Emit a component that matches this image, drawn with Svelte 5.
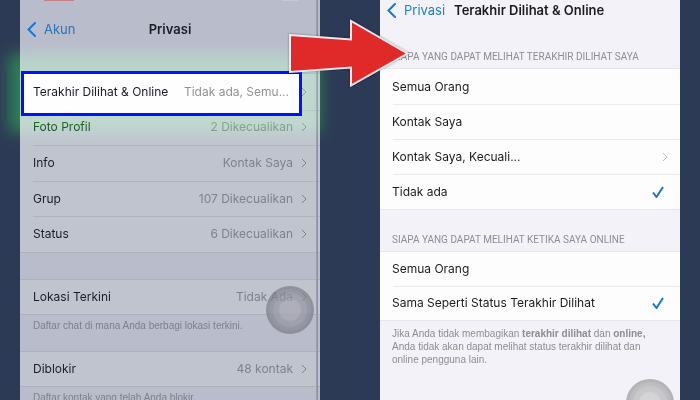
<script lang="ts">
  let whoLastSeen = $state('none');
  let whoOnline = $state('same');

  const privacy = [
    { label: 'Terakhir Dilihat & Online', value: 'Tidak ada, Semu...', active: true },
    { label: 'Foto Profil', value: '2 Dikecualikan' },
    { label: 'Info', value: 'Kontak Saya' },
    { label: 'Grup', value: '107 Dikecualikan' },
    { label: 'Status', value: '6 Dikecualikan' },
  ];

  const lastSeenOptions = [
    { id: 'all', label: 'Semua Orang' },
    { id: 'contacts', label: 'Kontak Saya' },
    { id: 'except', label: 'Kontak Saya, Kecuali...', more: true },
    { id: 'none', label: 'Tidak ada' },
  ];

  const onlineOptions = [
    { id: 'all', label: 'Semua Orang' },
    { id: 'same', label: 'Sama Seperti Status Terakhir Dilihat' },
  ];
</script>

{#snippet chevron()}
  <svg class="chevron" viewBox="0 0 6 10" width="6" height="10" aria-hidden="true">
    <path d="M1 1l4 4-4 4" />
  </svg>
{/snippet}

{#snippet back(label: string)}
  <button class="back" type="button">
    <svg viewBox="0 0 9 15" width="9" height="15" aria-hidden="true">
      <path d="M8 1L1.5 7.5 8 14" />
    </svg>
    {label}
  </button>
{/snippet}

{#snippet row(label: string, value: string, active = false)}
  <button class="row" class:active type="button">
    <span class="label">{label}</span>
    <span class="value">{value}</span>
    {@render chevron()}
  </button>
{/snippet}

{#snippet check()}
  <svg class="check" viewBox="0 0 12 12" width="12" height="12" aria-hidden="true">
    <path d="M1 6.5L4.5 11 11 1" />
  </svg>
{/snippet}

<main>
  <section class="phone dim">
    <div class="status"><i></i><b></b></div>
    <header>
      {@render back('Akun')}
      <h1>Privasi</h1>
    </header>

    <div class="list five">
      {#each privacy as item}
        {@render row(item.label, item.value, item.active)}
      {/each}
    </div>

    <div class="list spaced">
      {@render row('Lokasi Terkini', 'Tidak Ada')}
    </div>
    <p>Daftar chat di mana Anda berbagi lokasi terkini.</p>

    <div class="list after-note">
      {@render row('Diblokir', '48 kontak')}
    </div>
    <p>Daftar kontak yang telah Anda blokir.</p>

    <button class="assist" type="button" aria-label="AssistiveTouch"></button>
  </section>

  <section class="phone bright">
    <header>
      {@render back('Privasi')}
      <h1>Terakhir Dilihat &amp; Online</h1>
    </header>

    <h2>SIAPA YANG DAPAT MELIHAT TERAKHIR DILIHAT SAYA</h2>
    <div class="list four">
      {#each lastSeenOptions as option}
        <label class="row">
          <input type="radio" name="last-seen" value={option.id} bind:group={whoLastSeen} />
          <span class="label">{option.label}</span>
          {#if whoLastSeen === option.id}
            {@render check()}
          {:else if option.more}
            {@render chevron()}
          {/if}
        </label>
      {/each}
    </div>

    <h2>SIAPA YANG DAPAT MELIHAT KETIKA SAYA ONLINE</h2>
    <div class="list">
      {#each onlineOptions as option}
        <label class="row">
          <input type="radio" name="online" value={option.id} bind:group={whoOnline} />
          <span class="label">{option.label}</span>
          {#if whoOnline === option.id}
            {@render check()}
          {/if}
        </label>
      {/each}
    </div>
    <p>
      Jika Anda tidak membagikan <strong>terakhir dilihat</strong> dan <strong>online,</strong>
      Anda tidak akan dapat melihat status terakhir dilihat dan online pengguna lain.
    </p>

    <button class="assist" type="button" aria-label="AssistiveTouch"></button>
  </section>

  <svg class="arrow" viewBox="0 0 120 68" width="120" height="68" aria-hidden="true">
    <path d="M1 16L62 20.5V2L118.5 34.5 62 66.5V48.5L1 53z" />
  </svg>
</main>

<style>
  :global(body) {
    background: #2d3a55;
  }

  main {
    position: relative;
    display: flex;
    justify-content: center;
    gap: 60px;
    height: 100vh;
    overflow: hidden;
    background: #2d3a55;
    font-family: Inter, 'Liberation Sans', sans-serif;
    font-size: 12px;
    line-height: 16px;
  }

  button {
    border: 0;
    padding: 0;
    background: none;
    color: inherit;
    font: inherit;
    text-align: left;
  }

  svg {
    flex: none;
    fill: none;
  }

  .phone {
    position: relative;
    flex: 0 1 300px;
    min-width: 0;
    height: 100%;
  }

  .dim {
    --line: #adb0bb;
    --link: #2c73b8;
    --note: #7d808b;
    --value: #7f828c;
    --cell: #c0c4cf;
    background: #b9bccb;
    color: #1b1d26;
  }

  .bright {
    --line: #e6e6ea;
    --link: #1a7fd0;
    --note: #8d8d94;
    --value: #b9b9be;
    --cell: #fdfdfe;
    background: #f3f2f8;
    color: #1c1c1e;
  }

  /* right bezel of the first phone */
  .dim::after {
    content: '';
    position: absolute;
    top: 0;
    bottom: 0;
    right: 2px;
    width: 2px;
    background: linear-gradient(90deg, #a5a8b4, #858995);
  }

  .status {
    display: flex;
    justify-content: space-between;
    height: 1px;
    padding: 0 22px 0 24px;
  }

  .status i {
    width: 30px;
    background: #c58088;
  }

  .status b {
    width: 16px;
    background: #c6c9d3;
  }

  header {
    display: grid;
    grid-template-columns: 1fr auto 1fr;
    align-items: center;
    padding: 0 7px;
  }

  .dim header {
    height: 56px;
    margin-bottom: 16px;
  }

  .bright header {
    grid-template-columns: auto 1fr;
    gap: 9px;
    height: 20px;
    margin-bottom: 7px;
  }

  .back {
    display: flex;
    align-items: center;
    gap: 8px;
    color: var(--link);
    font-size: 13px;
  }

  .back svg {
    stroke: #1277dd;
    stroke-width: 2;
    stroke-linecap: round;
  }

  h1 {
    margin: 0;
    font-size: 13px;
    font-weight: 600;
  }

  h2 {
    margin: 0;
    padding: 23px 12px 4px;
    color: var(--note);
    font-family: Roboto, 'Liberation Sans', sans-serif;
    font-size: 10px;
    font-weight: 400;
    line-height: 14px;
    white-space: nowrap;
  }

  .list {
    box-sizing: border-box;
    display: grid;
    grid-auto-rows: 1fr;
    border: solid var(--line);
    border-width: 1px 0;
    background: var(--cell);
  }

  .five {
    min-height: 180px;
  }

  .four {
    min-height: 142px;
  }

  .spaced {
    margin-top: 26px;
  }

  .after-note {
    margin-top: 19px;
  }

  .row {
    position: relative;
    display: flex;
    align-items: center;
    min-height: 34px;
    padding: 0 13px;
    text-align: left;
  }

  .bright .row {
    padding: 0 12px;
  }

  .row + .row::after {
    content: '';
    position: absolute;
    top: 0;
    left: 13px;
    right: 0;
    height: 1px;
    background: var(--line);
    opacity: 0.8;
  }

  .label {
    flex: 1;
    white-space: nowrap;
  }

  .value {
    margin-right: 8px;
    color: var(--value);
    white-space: nowrap;
  }

  .chevron {
    stroke: var(--value);
  }

  .check {
    margin-right: 4px;
    stroke: #1578cf;
    stroke-width: 2;
  }

  .row input {
    position: absolute;
    opacity: 0;
  }

  /* green glow tints everything under it, the blue frame sits on top */
  .active::before {
    content: '';
    position: absolute;
    z-index: 1;
    inset: -8px 12px -10px 1px;
    background: #005c00;
    box-shadow: 0 0 14px 12px #005c00;
    mix-blend-mode: screen;
    pointer-events: none;
  }

  .active::after {
    content: '';
    position: absolute;
    z-index: 2;
    inset: -3px 18px -6px 1px;
    border: 3px solid #0012ff;
    background: #fefefe;
  }

  .active .label,
  .active .value {
    position: relative;
    z-index: 3;
  }

  .active .value {
    margin-right: 12px;
    color: #929292;
  }

  p {
    margin: 0;
    padding: 4px 30px 0 13px;
    color: var(--note);
    font-family: 'Liberation Sans', sans-serif;
    font-size: 10px;
    line-height: 13px;
  }

  .bright p {
    padding: 6px 30px 0 12px;
  }

  strong {
    font-weight: 600;
  }

  .assist {
    position: absolute;
    top: 286px;
    right: 6px;
    width: 48px;
    height: 48px;
    border-radius: 50%;
    background: radial-gradient(circle, #a4a4afaa 0 10px, #9292a0aa 12px 16px, #82828faa 18px 20px, #787885aa 22px);
  }

  .bright .assist {
    top: 379px;
    background: radial-gradient(circle, #d4d4d6 0 10px, #c8c8ca 12px 16px, #bebec0 18px 20px, #b4b4b6 22px);
  }

  .arrow {
    position: absolute;
    z-index: 4;
    top: 19px;
    left: calc(50% - 61px);
    fill: #df2a29;
    stroke: #ece9ee;
    stroke-width: 2;
    filter: drop-shadow(0 0 1px #0006);
  }
</style>
